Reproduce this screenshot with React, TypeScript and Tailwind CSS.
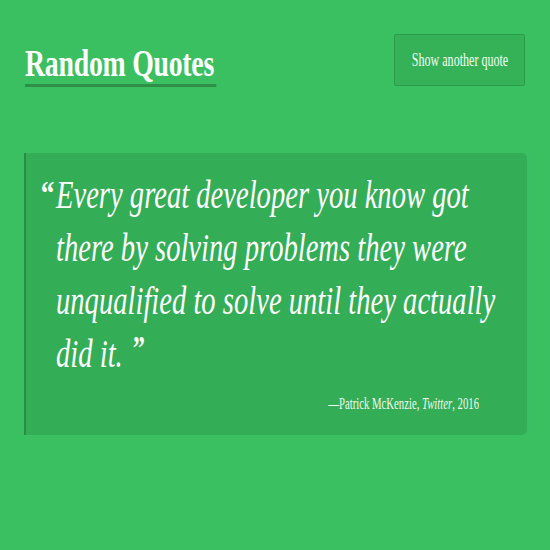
import React from "react";

const line = "block whitespace-nowrap origin-left scale-x-[0.715] h-[53px]";

export default function App() {
  return (
    <div className="w-[550px] h-[550px] bg-[#3bc061] text-white overflow-hidden" style={{ fontFamily: '"Liberation Serif", serif' }}>
      <div className="flex items-start justify-between pl-[25px] pr-[25px] pt-[34px]">
        <h1 className="mt-[10px] inline-block origin-left scale-x-[0.73] text-[38px] leading-[38px] font-bold tracking-[-0.3px] border-b-[3px] border-[#2f8f4a] pb-[2px] pr-[3px] whitespace-nowrap">
          Random Quotes
        </h1>
        <button className="w-[131px] h-[52px] bg-[#35b158] border border-[#2c9a4b] rounded-[2px] text-white flex items-center justify-center">
          <span className="inline-block whitespace-nowrap text-[18px] scale-x-[0.67] text-[#f0fff0]">Show another quote</span>
        </button>
      </div>
      <div className="mt-[66px] ml-[24px] mr-[23px] h-[282px] bg-[#34ad57] border-l-[2px] border-[#2a8c45] rounded-r-[5px] pt-[15px] pl-[30px] pr-[48px]">
        <div className="relative italic text-[40px] leading-[53px]">
          <span className="absolute left-[-17px] top-[-2px] not-italic font-bold text-[34px] scale-x-[0.8]">“</span>
          <span className={line}>Every great developer you know got</span>
          <span className={line}>there by solving problems they were</span>
          <span className={line}>unqualified to solve until they actually</span>
          <span className={line}>did it. <span className="not-italic font-bold text-[34px] relative top-[-8px] ml-[4px]">”</span></span>
        </div>
        <div className="flex justify-end mt-[14px]">
          <span className="inline-block whitespace-nowrap origin-right scale-x-[0.67] text-[16px] leading-[20px] text-[#eefaee]">
            —Patrick McKenzie, <i>Twitter</i>, 2016
          </span>
        </div>
      </div>
    </div>
  );
}
